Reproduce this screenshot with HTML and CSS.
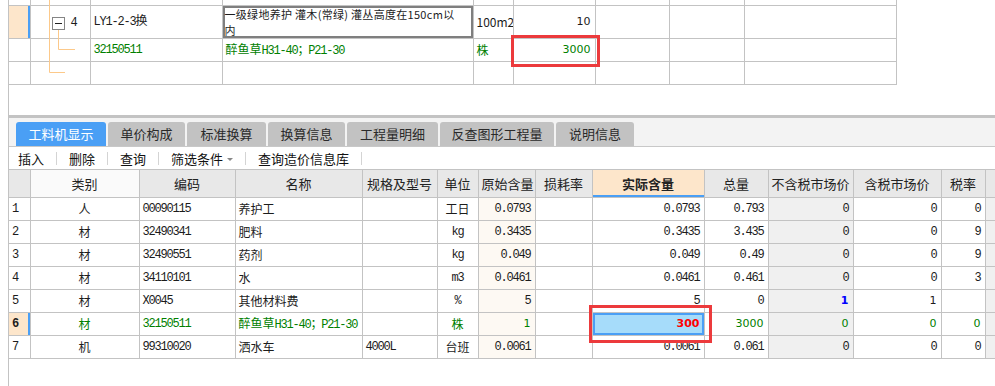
FILE: index.html
```html
<!DOCTYPE html>
<html lang="zh-CN">
<head>
  <meta charset="UTF-8" />
  <title>工料机显示</title>
  <link rel="stylesheet" href="styles.css">
</head>
<body>
  <div class="page">

    <div class="top">
      <table class="grid top-grid">
        <colgroup>
          <col style="width:21px"><col style="width:60px"><col style="width:132px"><col style="width:251px">
          <col style="width:40px"><col style="width:82px"><col style="width:74px"><col style="width:75px"><col style="width:152px">
        </colgroup>
        <tr class="r-prev"><td></td><td></td><td></td><td></td><td></td><td></td><td></td><td></td><td></td></tr>
        <tr class="r-tall">
          <td class="rh rh-cur"></td>
          <td class="tree"><span class="lvl">4</span></td>
          <td class="mono">LY1-2-3换</td>
          <td class="editing">一级绿地养护 灌木(常绿) 灌丛高度在150cm以<br>内</td>
          <td>100m2</td>
          <td class="num sans">10</td>
          <td></td><td></td><td></td>
        </tr>
        <tr class="green">
          <td class="rh"></td>
          <td></td>
          <td class="mono">32150511</td>
          <td>醉鱼草<span class="mono">H31-40；P21-30</span></td>
          <td>株</td>
          <td class="num sans">3000</td>
          <td></td><td></td><td></td>
        </tr>
        <tr>
          <td class="rh"></td><td></td><td></td><td></td><td></td><td></td><td></td><td></td><td></td>
        </tr>
      </table>

      <svg class="tree-lines" width="80" height="84" viewBox="0 0 80 84">
        <path d="M40.5 0V72.5H56" stroke="#fcc98a" fill="none"/>
        <path d="M49.5 29V49.5H66" stroke="#fcc98a" fill="none"/>
        <rect x="43.5" y="17.5" width="12" height="12" fill="#fff" stroke="#858585"/>
        <path d="M46 23.5H53" stroke="#222"/>
      </svg>

      <div class="mark mark-top"></div>
    </div>

    <div class="tabs">
      <div class="tab active">工料机显示</div>
      <div class="tab">单价构成</div>
      <div class="tab">标准换算</div>
      <div class="tab">换算信息</div>
      <div class="tab">工程量明细</div>
      <div class="tab">反查图形工程量</div>
      <div class="tab">说明信息</div>
    </div>

    <div class="toolbar">
      <span class="tool">插入</span>
      <span class="sep"></span>
      <span class="tool">删除</span>
      <span class="sep"></span>
      <span class="tool">查询</span>
      <span class="sep"></span>
      <span class="tool">筛选条件<span class="caret"></span></span>
      <span class="sep"></span>
      <span class="tool">查询造价信息库</span>
      <span class="sep"></span>
    </div>

    <table class="grid bottom-grid">
      <colgroup>
        <col style="width:21px"><col style="width:109px"><col style="width:96px"><col style="width:127px">
        <col style="width:75px"><col style="width:41px"><col style="width:57px"><col style="width:57px">
        <col style="width:112px"><col style="width:64px"><col style="width:85px"><col style="width:88px">
        <col style="width:44px"><col style="width:40px">
      </colgroup>
      <thead>
        <tr>
          <th></th>
          <th class="hover">类别</th>
          <th>编码</th>
          <th>名称</th>
          <th>规格及型号</th>
          <th>单位</th>
          <th>原始含量</th>
          <th>损耗率</th>
          <th class="sorted">实际含量</th>
          <th>总量</th>
          <th>不含税市场价</th>
          <th>含税市场价</th>
          <th>税率</th>
          <th></th>
        </tr>
      </thead>
      <tbody>
        <tr>
          <td class="rh mono">1</td><td class="c">人</td><td class="mono">00090115</td><td>养护工</td><td></td>
          <td class="c">工日</td><td class="num orig">0.0793</td><td></td><td class="num">0.0793</td><td class="num">0.793</td>
          <td class="num shade">0</td><td class="num">0</td><td class="num">0</td><td class="shade"></td>
        </tr>
        <tr>
          <td class="rh mono">2</td><td class="c">材</td><td class="mono">32490341</td><td>肥料</td><td></td>
          <td class="c mono">kg</td><td class="num orig">0.3435</td><td></td><td class="num">0.3435</td><td class="num">3.435</td>
          <td class="num shade">0</td><td class="num">0</td><td class="num">9</td><td class="shade"></td>
        </tr>
        <tr>
          <td class="rh mono">3</td><td class="c">材</td><td class="mono">32490551</td><td>药剂</td><td></td>
          <td class="c mono">kg</td><td class="num orig">0.049</td><td></td><td class="num">0.049</td><td class="num">0.49</td>
          <td class="num shade">0</td><td class="num">0</td><td class="num">9</td><td class="shade"></td>
        </tr>
        <tr>
          <td class="rh mono">4</td><td class="c">材</td><td class="mono">34110101</td><td>水</td><td></td>
          <td class="c mono">m3</td><td class="num orig">0.0461</td><td></td><td class="num">0.0461</td><td class="num">0.461</td>
          <td class="num shade">0</td><td class="num">0</td><td class="num">3</td><td class="shade"></td>
        </tr>
        <tr>
          <td class="rh mono">5</td><td class="c">材</td><td class="mono">X0045</td><td>其他材料费</td><td></td>
          <td class="c mono">%</td><td class="num orig">5</td><td></td><td class="num">5</td><td class="num">0</td>
          <td class="num shade blue sans">1</td><td class="num sans">1</td><td></td><td class="shade"></td>
        </tr>
        <tr class="green">
          <td class="rh rh-cur mono">6</td><td class="c">材</td><td class="mono">32150511</td><td>醉鱼草<span class="mono">H31-40；P21-30</span></td><td></td>
          <td class="c">株</td><td class="num orig sans">1</td><td></td><td class="num selected sans">300</td><td class="num sans">3000</td>
          <td class="num shade sans">0</td><td class="num sans">0</td><td class="num sans">0</td><td class="shade"></td>
        </tr>
        <tr>
          <td class="rh mono">7</td><td class="c">机</td><td class="mono">99310020</td><td>洒水车</td><td class="mono">4000L</td>
          <td class="c">台班</td><td class="num orig">0.0061</td><td></td><td class="num">0.0061</td><td class="num">0.061</td>
          <td class="num shade">0</td><td class="num">0</td><td class="num">0</td><td class="shade"></td>
        </tr>
      </tbody>
    </table>

    <div class="mark mark-bottom"></div>
  </div>
</body>
</html>
```

FILE: styles.css
```css
:root {
  --line: #c3c3c3;
  --blue: #4a9ff5;
  --peach: #fde6cb;
  --green: #008000;
  --mark: #ec3a3c;
  --text: #1c1c1c;
}

* {
  box-sizing: border-box;
  margin: 0;
  padding: 0;
}

body {
  background: #ffffff;
  color: var(--text);
  font-family: "Noto Sans CJK SC", "Noto Sans", sans-serif;
  font-size: 12px;
  overflow: hidden;
}

.page {
  position: relative;
  margin-left: 8px;
  width: 987px;
  height: 386px;
  border-left: 1px solid var(--line);
  overflow: hidden;
}

.mono,
.num {
  font-family: "Liberation Mono", "Noto Sans CJK SC", monospace;
  letter-spacing: -1.2px;
}

.grid .sans {
  font-family: "DejaVu Sans", "Noto Sans CJK SC", sans-serif;
  font-size: 11px;
  letter-spacing: 0;
}

/* grids */
.grid {
  table-layout: fixed;
  border-collapse: collapse;
}

.grid td,
.grid th {
  border: 1px solid var(--line);
  padding: 0 3px;
  white-space: nowrap;
  overflow: hidden;
  line-height: 14px;
}

.grid td:first-child,
.grid th:first-child {
  border-left: none;
}

.grid .num {
  text-align: right;
  padding-right: 4px;
}

.grid .c {
  text-align: center;
}

.green td {
  color: var(--green);
}

/* top grid */
.top {
  position: relative;
  height: 115px;
  overflow: hidden;
}

.top-grid {
  width: 887px;
  margin-top: -18px;
}

.top-grid tr {
  height: 23px;
}

.top-grid tr.r-tall {
  height: 33px;
}

.top-grid .editing {
  white-space: nowrap;
  font-size: 11px;
  line-height: 16px;
  padding: 0 2px;
  letter-spacing: 0.3px;
  box-shadow: inset 0 0 0 2px #7f7f7f;
}

.top-grid .tree {
  padding-left: 40px;
}

.lvl {
  font-family: "Liberation Mono", monospace;
}

.rh-cur {
  background: var(--peach);
  box-shadow: inset -2px 0 0 var(--blue);
}

.tree-lines {
  position: absolute;
  left: 0;
  top: 0;
}

.mark {
  position: absolute;
  border: 3px solid var(--mark);
}

.mark-top {
  left: 502px;
  top: 35px;
  width: 89px;
  height: 32px;
}

.mark-bottom {
  left: 580px;
  top: 305px;
  width: 123px;
  height: 38px;
}

/* tabs */
.tabs {
  display: flex;
  align-items: flex-end;
  gap: 2px;
  height: 32px;
  padding-left: 7px;
  background: #f3f3f3;
  border-top: 3px solid #c3c3c3;
  border-bottom: 1px solid #c8c8c8;
}

.tab {
  flex: none;
  height: 24px;
  line-height: 24px;
  font-size: 13px;
  white-space: nowrap;
  color: #2a2a2a;
  background: #c2c2c2;
  border-radius: 3px 3px 0 0;
  text-align: center;
}

.tab:nth-child(1) { width: 90px; }
.tab:nth-child(2) { width: 77px; }
.tab:nth-child(3) { width: 79px; }
.tab:nth-child(4) { width: 77px; }
.tab:nth-child(5) { width: 91px; }
.tab:nth-child(6) { width: 114px; }
.tab:nth-child(7) { width: 78px; }

.tab.active {
  background: var(--blue);
  color: #ffffff;
}

/* toolbar */
.toolbar {
  display: flex;
  align-items: center;
  gap: 12px;
  height: 22px;
  padding-left: 9px;
  font-size: 13px;
  color: #111;
}

.sep {
  width: 1px;
  height: 13px;
  background: #d4d4d4;
}

.caret {
  display: inline-block;
  margin-left: 4px;
  vertical-align: middle;
  border-left: 3px solid transparent;
  border-right: 3px solid transparent;
  border-top: 3px solid #888;
}

/* bottom grid */
.bottom-grid {
  width: 1016px;
}

.bottom-grid thead tr {
  height: 28px;
}

.bottom-grid th {
  background: #e8e8e8;
  font-weight: normal;
  font-size: 13px;
  color: #222;
}

.bottom-grid th.hover {
  background: #fafafa;
}

.bottom-grid th.sorted {
  background: var(--peach);
  font-weight: bold;
  box-shadow: inset 0 -2px 0 var(--blue);
}

.bottom-grid tbody tr {
  height: 23px;
}

.bottom-grid .rh {
  padding-left: 3px;
}

.bottom-grid .rh-cur {
  font-weight: bold;
  color: var(--text);
}

.bottom-grid .orig {
  background: #fdf9f3;
}

.bottom-grid .shade {
  background: #f0f0f0;
}

.bottom-grid td.blue {
  color: #0000ff;
  font-weight: bold;
}

.bottom-grid td.selected {
  background: #a6dcfa;
  color: #ff0000;
  font-weight: bold;
  box-shadow: inset 0 0 0 2px var(--blue);
}
```
